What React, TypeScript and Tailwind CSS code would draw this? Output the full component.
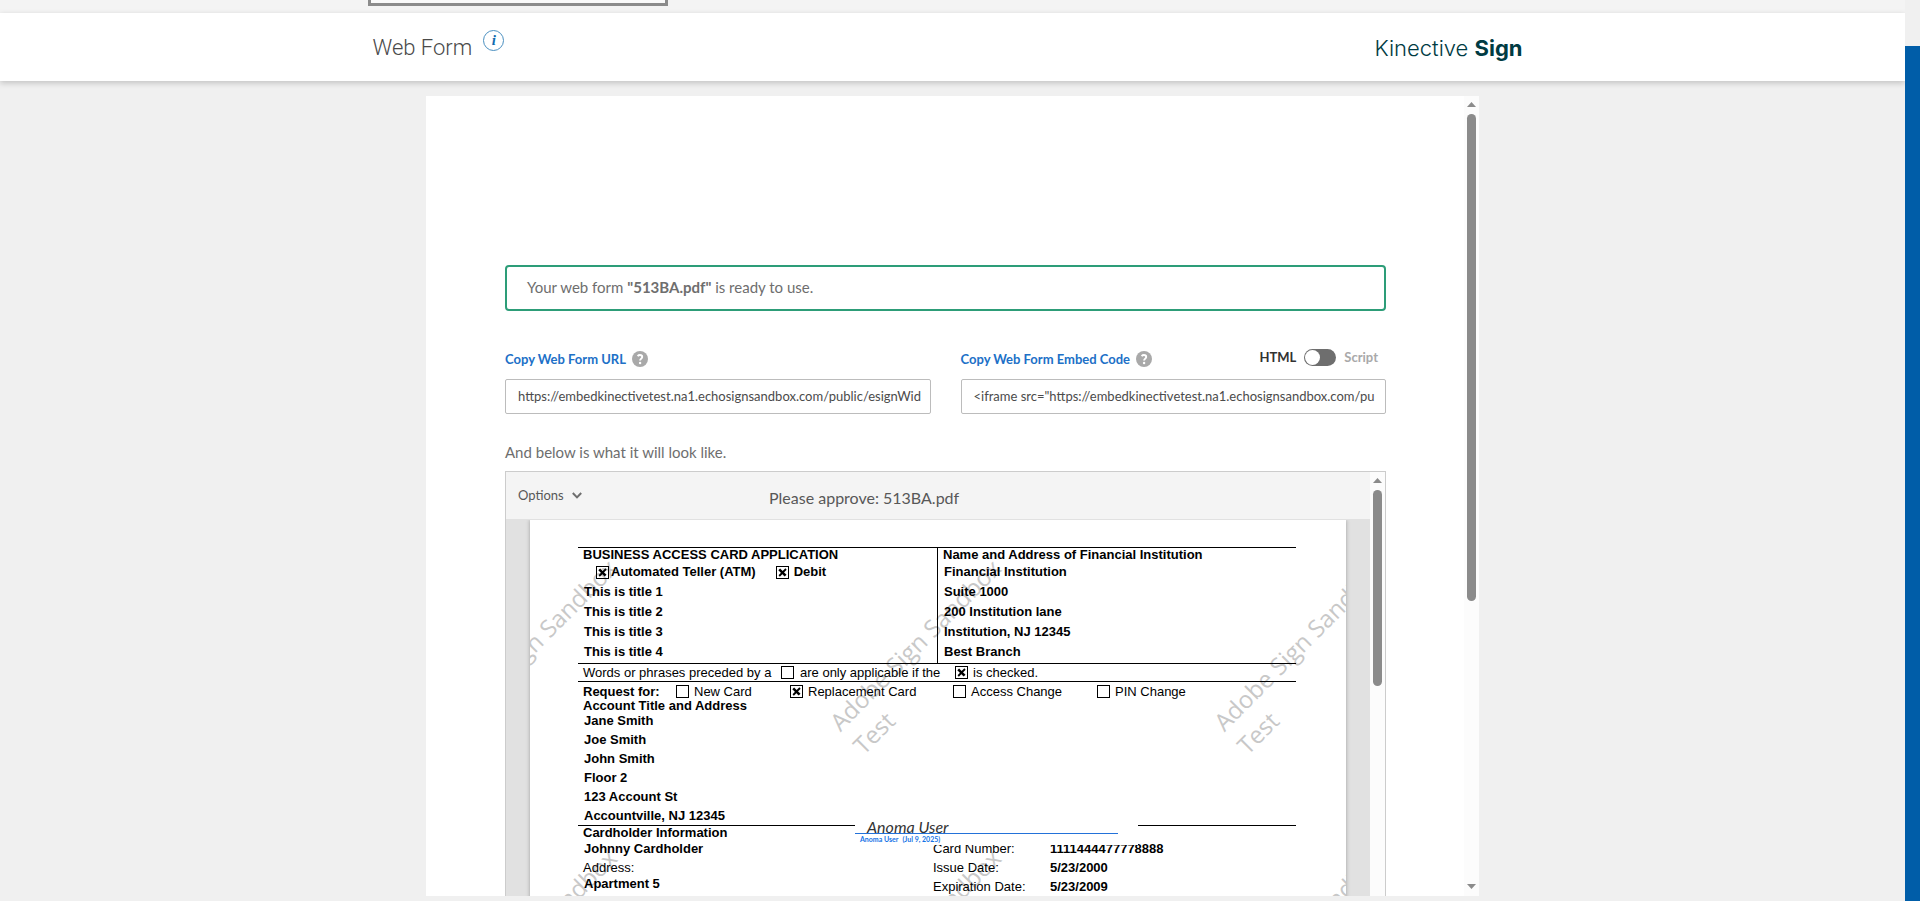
import * as React from 'react';

const WATERMARKS = [
  'left-[-92px] top-[194px]',
  'left-[292px] top-[194px]',
  'left-[676px] top-[194px]',
  'left-[-92px] top-[484px]',
  'left-[292px] top-[484px]',
  'left-[676px] top-[484px]',
];

const TITLES = ['This is title 1', 'This is title 2', 'This is title 3', 'This is title 4'];
const INSTITUTION = ['Financial Institution', 'Suite 1000', '200 Institution lane', 'Institution, NJ 12345', 'Best Branch'];
const ACCOUNT = ['Jane Smith', 'Joe Smith', 'John Smith', 'Floor 2', '123 Account St', 'Accountville, NJ 12345'];

const Scrollbar = ({ thumb }: { thumb: string }) => (
  <div className="flex w-[15px] shrink-0 flex-col items-center bg-[#fcfcfc] pt-1.5 pb-[7px]">
    <svg width="9" height="5" viewBox="0 0 9 5" fill="#8b8b8b">
      <path d="M4.5 0 9 5H0z" />
    </svg>
    <div className={`mt-[7px] w-[9px] shrink-0 rounded-full bg-[#8b8b8b] ${thumb}`} />
    <svg className="mt-auto" width="9" height="5" viewBox="0 0 9 5" fill="#8b8b8b">
      <path d="M4.5 5 0 0h9z" />
    </svg>
  </div>
);

const HelpIcon = () => (
  <button type="button" aria-label="Help" className="size-4">
    <svg viewBox="0 0 16 16" className="size-4">
      <circle cx="8" cy="8" r="8" fill="#a9a9a9" />
      <path d="M5.6 5.1C6.3 4.3 7 4 7.9 4c1.4 0 2.3.8 2.3 1.9 0 1.6-2.1 1.8-2.1 3.6" fill="none" stroke="#fff" strokeWidth="1.9" />
      <circle cx="8.1" cy="12" r="1.2" fill="#fff" />
    </svg>
  </button>
);

type TickProps = { label: string; checked?: boolean; gap?: string };

const Tick = ({ label, checked = false, gap = 'gap-[5px]' }: TickProps) => (
  <label className={`flex items-center ${gap}`}>
    <span className="relative size-[13px]">
      <input
        type="checkbox"
        defaultChecked={checked}
        className="peer block size-[13px] appearance-none border border-black"
      />
      <svg
        viewBox="0 0 13 13"
        className="pointer-events-none absolute inset-0 hidden size-[13px] peer-checked:block"
        fill="none"
        stroke="#000"
      >
        <path d="M3.2 3.4 9.6 9.6" strokeWidth="2.6" />
        <path d="M10 3 3.2 10" strokeWidth="1.8" />
      </svg>
    </span>
    {label}
  </label>
);

const PdfPage = () => (
  <div className="relative h-[1050px] overflow-hidden bg-white pt-[27px] pr-[50px] pl-12 font-['Liberation_Sans',Arial,sans-serif] text-[13px] whitespace-nowrap text-black shadow-[0_0_4px_rgba(0,0,0,0.3)]">
    {WATERMARKS.map((pos) => (
      <div
        key={pos}
        aria-hidden="true"
        className={`absolute origin-top-left -rotate-45 font-['Open_Sans',sans-serif] text-2xl leading-[33px] text-[#c8c8c8] ${pos}`}
      >
        Adobe Sign Sandbox
        <br />
        Test
      </div>
    ))}

    <div className="relative">
      <div className="flex border-y border-black font-bold">
        <div className="w-1/2 pb-px pl-[5px]">
          <div className="h-[14px] leading-[14px]">BUSINESS ACCESS CARD APPLICATION</div>
          <div className="flex h-5 items-center gap-5 pl-[13px]">
            <Tick label="Automated Teller (ATM)" checked gap="gap-0.5" />
            <Tick label="Debit" checked />
          </div>
          {TITLES.map((line) => (
            <div key={line} className="h-5 pl-px leading-5">{line}</div>
          ))}
        </div>
        <div className="w-1/2 border-l border-black pb-px pl-[5px]">
          <div className="h-[14px] leading-[14px]">Name and Address of Financial Institution</div>
          {INSTITUTION.map((line) => (
            <div key={line} className="h-5 pl-px leading-5">{line}</div>
          ))}
        </div>
      </div>

      <div className="flex h-[18px] items-center border-b border-black pl-[5px]">
        <span className="w-[198px]">Words or phrases preceded by a</span>
        <div className="w-[174px]"><Tick label="are only applicable if the" gap="gap-[6px]" /></div>
        <Tick label="is checked." checked />
      </div>

      <div className="flex h-[19px] items-center pl-[5px]">
        <b className="w-[93px]">Request for:</b>
        <div className="w-[114px]"><Tick label="New Card" /></div>
        <div className="w-[163px]"><Tick label="Replacement Card" checked /></div>
        <div className="w-36"><Tick label="Access Change" /></div>
        <Tick label="PIN Change" />
      </div>

      <div className="pl-[5px] font-bold">
        <div className="h-2.5 leading-[10px]">Account Title and Address</div>
        {ACCOUNT.map((line) => (
          <div key={line} className="h-[19px] pl-px leading-5">{line}</div>
        ))}
      </div>

      <div className="relative border-t border-black">
        <div className="h-[13px] pl-[5px] leading-[14px] font-bold">Cardholder Information</div>
        <div className="flex">
          <div className="w-[355px] pl-[5px] leading-[19px]">
            <div className="pl-px font-bold">Johnny Cardholder</div>
            <div>Address:</div>
            <div className="pl-px leading-[13px] font-bold">Apartment 5</div>
          </div>
          <dl className="grid grid-cols-[117px_auto] leading-[19px]">
            <dt>Card Number:</dt>
            <dd className="font-bold">1111444477778888</dd>
            <dt>Issue Date:</dt>
            <dd className="font-bold">5/23/2000</dd>
            <dt>Expiration Date:</dt>
            <dd className="font-bold">5/23/2009</dd>
          </dl>
        </div>

        {/* signature stamp sits over the form */}
        <div className="absolute -top-2 left-[277px] h-[27px] w-[283px] bg-white">
          <div className="h-4 w-[263px] border-b border-[#2372d9] pl-3 font-['Lato',sans-serif] text-base leading-[18px] text-[#333] italic">
            Anoma User
          </div>
          <div className="flex gap-1 pl-[5px] font-['Lato',sans-serif] text-[7px] leading-[11px] font-bold text-[#1473e6]">
            <span>Anoma User</span>
            <span>(Jul 9, 2025)</span>
          </div>
        </div>
      </div>
    </div>
  </div>
);

const inputClass =
  'h-[35px] w-full rounded-xs border border-[#bcbcbc] bg-white pt-0 pr-2 pb-0.5 pl-3 text-[13px] text-[#4b4b4b] outline-none focus:border-[#1473e6]';

export default function App() {
  const [script, setScript] = React.useState(false);

  return (
    <div className="flex h-screen overflow-hidden bg-[#f0f0f0] font-['Lato',sans-serif] text-[#6e6e6e]">
      <div className="flex min-w-0 flex-1 flex-col overflow-hidden">
        <div className="h-[13px] shrink-0 bg-[#f4f4f4]">
          <div className="mx-auto max-w-[1170px]">
            <div className="h-1.5 w-[300px] border-3 border-t-0 border-[#8c8c8c] bg-[#fafafa]" />
          </div>
        </div>

        <header className="h-[68px] shrink-0 bg-white shadow-[0_2px_6px_rgba(0,0,0,0.2)]">
          <div className="mx-auto flex h-full max-w-[1170px] items-center justify-between pr-[15px] pl-[5px]">
            <div className="flex items-start gap-[11px]">
              <h1 className="pt-0.5 font-['Roboto',sans-serif] text-[22px] leading-8 font-light text-[#4a4a4a]">Web Form</h1>
              <button
                type="button"
                aria-label="Information"
                className="flex size-[21px] items-center justify-center rounded-full border border-[#4a8fc0] font-['Liberation_Serif',serif] text-[15px] leading-none font-bold text-[#0f6cb0] italic"
              >
                i
              </button>
            </div>
            <div className="pt-0.5 font-['Inter',sans-serif] text-[22px] leading-8 font-light text-[#003b43]">
              Kinective <span className="font-bold">Sign</span>
            </div>
          </div>
        </header>

        <main className="mx-auto mt-[15px] mb-[5px] flex min-h-0 w-full max-w-[1053px] flex-1 bg-white">
          <div className="min-w-0 flex-1 overflow-hidden pt-[169px] pr-[78px] pl-[79px]">
            <div role="status" className="flex h-[46px] items-center rounded border-2 border-[#2d9d78] px-5 pb-0.5 text-[15px]">
              <p>
                Your web form <b>"513BA.pdf"</b> is ready to use.
              </p>
            </div>

            <div className="mt-[34px] grid grid-cols-2 gap-[30px]">
              <div>
                <div className="flex h-[34px] items-center gap-1.5 pb-1.5">
                  <label htmlFor="form-url" className="text-[13px] leading-5 font-bold text-[#2070c7]">Copy Web Form URL</label>
                  <HelpIcon />
                </div>
                <input id="form-url" type="text" readOnly className={inputClass} defaultValue="https://embedkinectivetest.na1.echosignsandbox.com/public/esignWid" />
              </div>
              <div>
                <div className="flex h-[34px] items-center gap-1.5 pb-1.5">
                  <label htmlFor="embed-code" className="text-[13px] leading-5 font-bold text-[#2070c7]">Copy Web Form Embed Code</label>
                  <HelpIcon />
                  <label className="mb-1 ml-auto flex items-center gap-2 pr-2 text-[13px] leading-5 font-bold">
                    <span className={script ? 'text-[#a9a9a9]' : 'text-[#323232]'}>HTML</span>
                    <input
                      type="checkbox"
                      role="switch"
                      checked={script}
                      onChange={(e) => setScript(e.target.checked)}
                      className="flex h-[17px] w-8 appearance-none items-center rounded-full bg-[#6e6e6e] px-px before:size-[15px] before:rounded-full before:bg-white checked:justify-end"
                    />
                    <span className={script ? 'text-[#323232]' : 'text-[#a9a9a9]'}>Script</span>
                  </label>
                </div>
                <input id="embed-code" type="text" readOnly className={inputClass} defaultValue={'<iframe src="https://embedkinectivetest.na1.echosignsandbox.com/pu'} />
              </div>
            </div>

            <p className="mt-[27px] text-[15px] leading-[22px]">And below is what it will look like.</p>

            <section className="mt-2 flex border border-[#cccccc]">
              <div className="min-w-0 flex-1 bg-[#e1e1e1]">
                <div className="grid h-12 grid-cols-[251px_1fr] items-center border-b border-[#e1e1e1] bg-[#f4f4f4] px-3 text-[#585858]">
                  <button type="button" className="flex items-center gap-2 text-[13px]">
                    Options
                    <svg width="10" height="7" viewBox="0 0 10 7" fill="none" stroke="#6e6e6e" strokeWidth="2">
                      <path d="m.8 1 4.2 4.400L9.200 1" />
                    </svg>
                  </button>
                  <h2 className="pt-1 text-base">Please approve: 513BA.pdf</h2>
                </div>
                <div className="overflow-hidden px-6">
                  <PdfPage />
                </div>
              </div>
              <Scrollbar thumb="h-[196px]" />
            </section>
          </div>
          <Scrollbar thumb="h-[487px]" />
        </main>
      </div>
      <div className="w-[15px] shrink-0 pt-[46px]">
        <div className="h-full bg-[#005da8]" />
      </div>
    </div>
  );
}
